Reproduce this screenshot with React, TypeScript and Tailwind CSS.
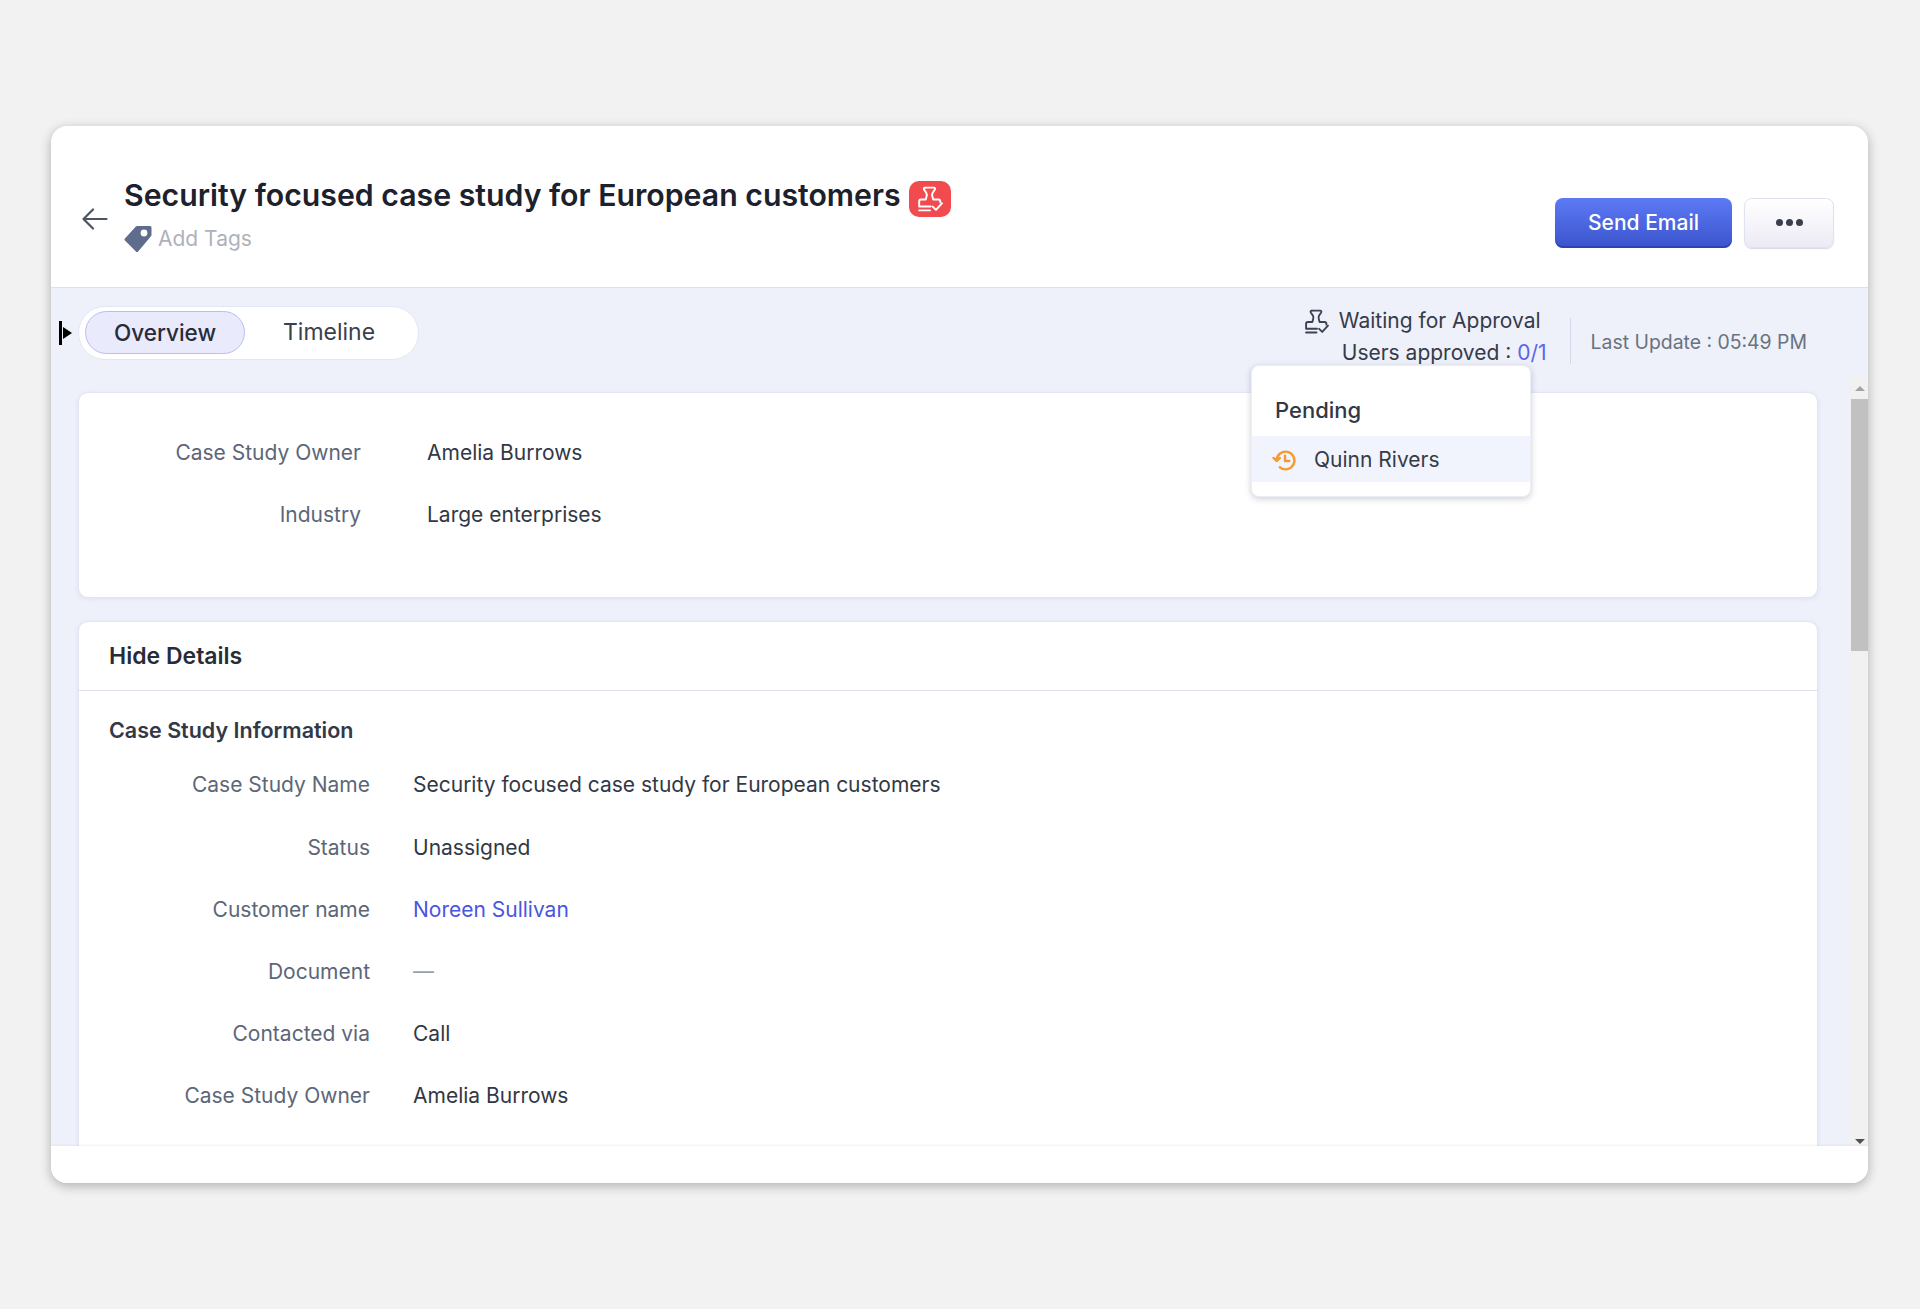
const FONT = "font-['Inter',sans-serif]";

const topDetails = [
  { label: "Case Study Owner", value: "Amelia Burrows" },
  { label: "Industry", value: "Large enterprises" },
];

const infoDetails = [
  { label: "Case Study Name", value: "Security focused case study for European customers" },
  { label: "Status", value: "Unassigned" },
  { label: "Customer name", value: "Noreen Sullivan", link: true },
  { label: "Document", value: "—", muted: true },
  { label: "Contacted via", value: "Call" },
  { label: "Case Study Owner", value: "Amelia Burrows" },
];

function StampIcon({ className }: { className?: string }) {
  return (
    <svg viewBox="0 0 24 24" fill="none" stroke="currentColor" strokeWidth="1.8" strokeLinecap="round" strokeLinejoin="round" className={className}>
      <path d="M7.5 1.5h8c1 0 1.5 1 1 1.8l-2 3c-.7 1.2-.7 2.6-.2 3.8l.7 2.4h4.7c1 0 1.8.8 1.8 1.8v.7" />
      <path d="M7.5 1.5c-1 0-1.5 1-1 1.8l2 3c.7 1.2.7 2.6.2 3.8l-.7 2.4H3.8c-1 0-1.8.8-1.8 1.8V19h10.5" />
      <path d="M2 22.5h10" />
      <path d="M14.5 19l3 3 5.5-6" />
    </svg>
  );
}

function Row({ label, value, link, muted, labelW, gap, h }: { label: string; value: string; link?: boolean; muted?: boolean; labelW: string; gap: string; h: string }) {
  return (
    <div className={`flex items-center text-[21px] ${h} ${gap}`}>
      <div className={`text-right text-[#5c6679] ${labelW}`}>{label}</div>
      <div className={link ? "text-[#4a55e0]" : muted ? "text-[#9aa1ad]" : "text-[#323845]"}>{value}</div>
    </div>
  );
}

export default function App() {
  return (
    <div className={`min-h-[1309px] bg-[#f2f2f2] px-[51px] pt-[126px] ${FONT}`}>
      <div className="relative flex h-[1057px] w-[1817px] flex-col overflow-hidden rounded-[16px] bg-white shadow-[0_3px_12px_rgba(0,0,0,0.28)]">
        {/* Header */}
        <div className="flex h-[162px] shrink-0 items-center justify-between border-b border-[#dcdfee] pl-[31px] pr-[34px]">
          <div className="flex items-center gap-[16px]">
            <svg viewBox="0 0 26 22" fill="none" stroke="#4b5563" strokeWidth="2.2" strokeLinecap="round" strokeLinejoin="round" className="mt-[25px] h-[22px] w-[26px]">
              <path d="M24.5 11H1.5M11 1.5L1.5 11 11 20.5" />
            </svg>
            <div className="mt-[14px]">
              <div className="flex items-center gap-[8px]">
                <h1 className="text-[30.25px] leading-[42px] font-semibold text-[#1c212c]">Security focused case study for European customers</h1>
                <div className="mt-[8px] flex h-[36px] w-[42px] items-center justify-center rounded-[10px] bg-[#f24b4f] text-white">
                  <StampIcon className="h-[26px] w-[26px]" />
                </div>
              </div>
              <div className="mt-[6px] flex items-center gap-[6px]">
                <svg viewBox="0 0 28 28" className="h-[28px] w-[28px]">
                  <path d="M2 14.5L13 2.5H26V10L13 25.5Z" fill="#5e6d8c" stroke="#5e6d8c" strokeWidth="3" strokeLinejoin="round" />
                  <circle cx="20" cy="8" r="3.4" fill="#fff" />
                </svg>
                <span className="text-[21px] text-[#aeb2ba]">Add Tags</span>
              </div>
            </div>
          </div>
          <div className="mt-[32px] flex items-center gap-[12px]">
            <button className="h-[50px] w-[177px] rounded-[8px] bg-gradient-to-b from-[#5d7af5] to-[#3b54cc] text-[21px] font-medium text-white shadow-[inset_0_-2px_0_rgba(30,50,150,0.5)]">
              Send Email
            </button>
            <button className="flex h-[50px] w-[90px] items-center justify-center gap-[3px] rounded-[8px] border border-[#dfe2ef] bg-gradient-to-b from-white to-[#eceaf5] shadow-[0_1px_1px_rgba(90,100,160,0.25)]">
              <span className="h-[7px] w-[7px] rounded-full bg-[#3a3f4b]" />
              <span className="h-[7px] w-[7px] rounded-full bg-[#3a3f4b]" />
              <span className="h-[7px] w-[7px] rounded-full bg-[#3a3f4b]" />
            </button>
          </div>
        </div>

        {/* Body */}
        <div className="flex min-h-0 flex-1 flex-col bg-[#eef0fa]">
          <div className="flex h-[90px] shrink-0 items-start justify-between pl-[8px] pr-[61px]">
            <div className="mt-[18px] flex items-center gap-[6px]">
              <div className="flex items-center">
                <div className="h-[24px] w-[3px] bg-black" />
                <div className="ml-[1px] h-0 w-0 border-y-[6.5px] border-l-[9px] border-y-transparent border-l-black" />
              </div>
              <div className="flex h-[54px] w-[341px] items-center rounded-full border border-[#e4e6f4] bg-white pb-[1px] pl-[6px] text-[22.5px]">
                <div className="flex h-[43px] w-[160px] items-center justify-center rounded-full border border-[#b6bef6] bg-[#e9eafc] font-medium text-[#272c38]">Overview</div>
                <div className="ml-[38px] text-[23px] text-[#3a404d]">Timeline</div>
              </div>
            </div>
            <div className="mt-[17px] flex items-start text-[21px]">
              <div className="text-right leading-[32px] text-[#353b49]">
                <div className="flex items-center pr-[6px]">
                  <StampIcon className="mr-[10px] h-[25px] w-[25px] text-[#3c4250]" />
                  Waiting for Approval
                </div>
                <div>
                  Users approved : <span className="text-[#5a67e8]">0/1</span>
                </div>
              </div>
              <div className="ml-[23px] mt-[13px] h-[46px] w-px bg-[#d5d8e8]" />
              <div className="ml-[20px] mt-[21px] text-[19.4px] leading-[32px] text-[#6a7280]">Last Update : 05:49 PM</div>
            </div>
          </div>

          <div className="flex min-h-0 flex-1">
            <div className="min-w-0 flex-1 overflow-hidden pl-[27px] pr-[31px] pt-[14px]">
              <div className="h-[206px] rounded-[10px] border border-[#e2e5f3] bg-white pl-[1px] pt-[29px] shadow-[0_1px_4px_rgba(100,110,180,0.12)]">
                {topDetails.map((row) => (
                  <Row key={row.label} {...row} h="h-[62px]" labelW="w-[281px]" gap="gap-[66px]" />
                ))}
              </div>
              <div className="mt-[23px] h-[900px] rounded-[10px] border border-[#e2e5f3] bg-white shadow-[0_1px_4px_rgba(100,110,180,0.12)]">
                <div className="flex h-[69px] items-center border-b border-[#dfe1e8] pl-[30px] text-[23px] font-semibold text-[#272c38]">Hide Details</div>
                <div className="pl-[30px] pt-[23px]">
                  <div className="text-[21.5px] leading-[32px] font-semibold text-[#323845]">Case Study Information</div>
                  <div className="-ml-[30px] mt-[8px]">
                    {infoDetails.map((row) => (
                      <Row key={row.label} {...row} h="h-[62.2px]" labelW="w-[291px]" gap="gap-[43px]" />
                    ))}
                  </div>
                </div>
              </div>
            </div>

            {/* Scrollbar */}
            <div className="flex w-[19px] shrink-0 flex-col bg-[#f1f1f1] pl-[2px]">
              <div className="flex h-[21px] items-center justify-center">
                <div className="h-0 w-0 border-x-[5px] border-b-[5px] border-x-transparent border-b-[#a3a3a3]" />
              </div>
              <div className="h-[252px] bg-[#c1c1c1]" />
              <div className="flex flex-1 items-end justify-center pb-[2px]">
                <div className="h-0 w-0 border-x-[5px] border-t-[5px] border-x-transparent border-t-[#505050]" />
              </div>
            </div>
          </div>
        </div>

        {/* Footer */}
        <div className="h-[37px] shrink-0 bg-white shadow-[0_-1px_2px_rgba(0,0,0,0.05)]" />

        {/* Approval popover */}
        <div className="absolute left-[1200px] top-[239px] h-[132px] w-[280px] rounded-[8px] border border-[#eceef5] bg-white shadow-[0_2px_6px_rgba(60,64,90,0.25)]">
          <div className="flex h-[70px] items-end pb-[9px] pl-[23px] text-[22px] font-medium text-[#323845]">Pending</div>
          <div className="flex h-[46px] items-center bg-[#f1f4fc] pl-[20px] pt-[2px] text-[21px] text-[#353b49]">
            <svg viewBox="0 0 24 24" fill="none" stroke="#f59a2e" strokeWidth="2.3" strokeLinecap="round" strokeLinejoin="round" className="mr-[17px] h-[25px] w-[25px]">
              <path d="M4.5 12a8.5 8.5 0 1 1 3 6.5" />
              <path d="M1.5 9.5l3 3 3-3" />
              <path d="M12.5 7.5v5h4" />
            </svg>
            Quinn Rivers
          </div>
        </div>
      </div>
    </div>
  );
}
